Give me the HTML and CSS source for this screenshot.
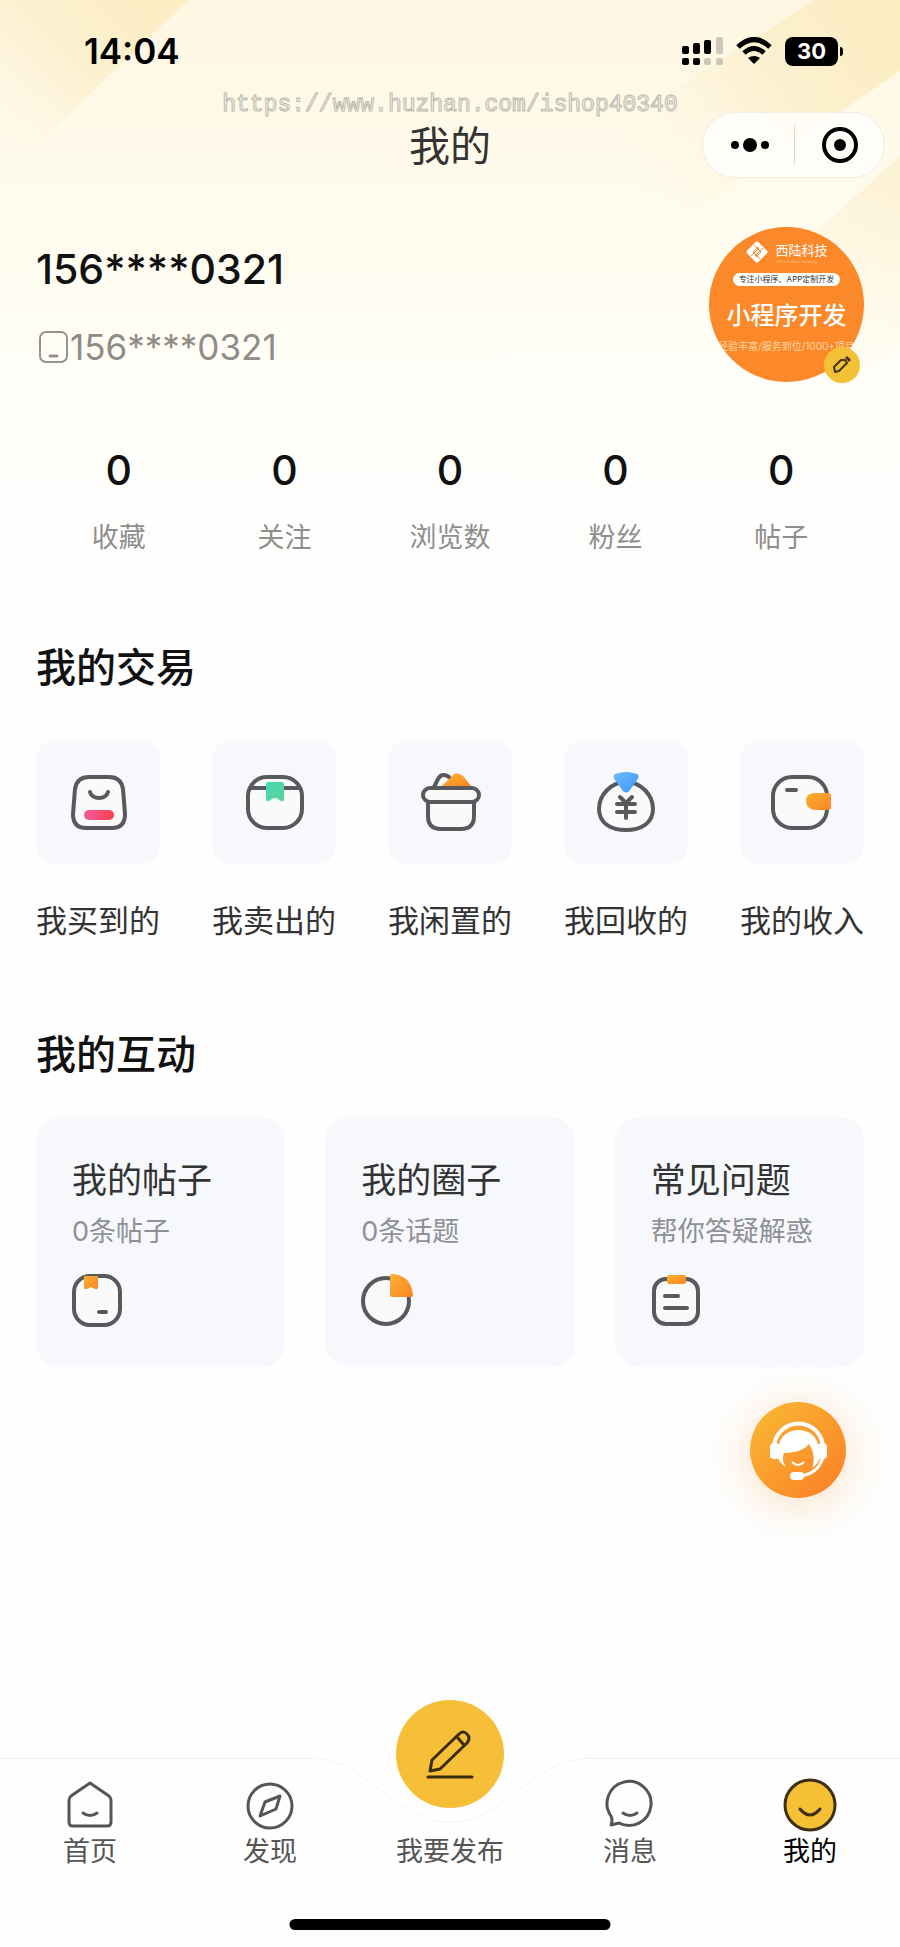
FILE: index.html
```html
<!DOCTYPE html>
<html lang="zh-CN">
<head>
    <meta charset="UTF-8">
    <meta name="viewport" content="width=device-width, initial-scale=1.0">
    <title>我的</title>
    <link rel="stylesheet" href="styles.css">
</head>
<body>
<div class="page">

  <!-- background light streaks -->
  <svg class="streaks" viewBox="0 0 900 600" preserveAspectRatio="none" aria-hidden="true">
    <defs>
      <linearGradient id="streakLeft" gradientUnits="userSpaceOnUse" x1="150" y1="10" x2="10" y2="150">
        <stop offset="0" stop-color="#fbedc4"/>
        <stop offset=".5" stop-color="#fcf1d2"/>
        <stop offset="1" stop-color="#fff6e4" stop-opacity="0"/>
      </linearGradient>
      <linearGradient id="streakRight" gradientUnits="userSpaceOnUse" x1="900" y1="20" x2="640" y2="190">
        <stop offset="0" stop-color="#fbedc0"/>
        <stop offset=".5" stop-color="#fcf1d2"/>
        <stop offset="1" stop-color="#fff8e8" stop-opacity="0"/>
      </linearGradient>
      <linearGradient id="streakLow" gradientUnits="userSpaceOnUse" x1="900" y1="180" x2="790" y2="390">
        <stop offset="0" stop-color="#fcf2d4"/>
        <stop offset="1" stop-color="#fffaec" stop-opacity="0"/>
      </linearGradient>
    </defs>
    <path d="M0 0H188L0 180Z" fill="url(#streakLeft)"/>
    <path d="M815 0H900V71L700 208L560 208L630 118Z" fill="url(#streakRight)"/>
    <path d="M900 156V345L790 430L730 400V310Z" fill="url(#streakLow)"/>
  </svg>

  <header class="statusBar">
    <span class="time">14:04</span>
    <div class="statusIcons">
      <svg width="42" height="30" viewBox="0 0 42 30">
        <rect x="1" y="10" width="7" height="8" rx="2"/>
        <rect x="12" y="7" width="7" height="11" rx="2"/>
        <rect x="23" y="4" width="7" height="14" rx="2"/>
        <rect x="35" y="1" width="7" height="17" rx="2" fill="#cdc7b8"/>
        <rect x="1" y="22" width="7" height="7" rx="2"/>
        <rect x="12" y="22" width="7" height="7" rx="2"/>
        <rect x="23" y="22" width="7" height="7" rx="2" fill="#cdc7b8"/>
        <rect x="35" y="22" width="7" height="7" rx="2" fill="#cdc7b8"/>
      </svg>
      <svg width="36" height="28" viewBox="0 0 36 28">
        <path d="M2 10Q18 -5 34 10" fill="none" stroke="#000" stroke-width="5"/>
        <path d="M8 16Q18 7 28 16" fill="none" stroke="#000" stroke-width="5"/>
        <path d="M12 21Q18 17 24 21L18 27Z"/>
      </svg>
      <div class="battery">30</div>
    </div>
  </header>

  <div class="watermark">https://www.huzhan.com/ishop40340</div>

  <div class="navBar">
    <h1>我的</h1>
    <div class="capsule">
      <button class="capsuleBtn" aria-label="更多">
        <svg width="40" height="16" viewBox="0 0 40 16"><circle cx="5" cy="8" r="4"/><circle cx="20" cy="8" r="7"/><circle cx="35" cy="8" r="4"/></svg>
      </button>
      <button class="capsuleBtn" aria-label="关闭">
        <svg width="38" height="38" viewBox="0 0 38 38"><circle cx="19" cy="19" r="16" fill="none" stroke="#000" stroke-width="4"/><circle cx="19" cy="19" r="6"/></svg>
      </button>
    </div>
  </div>

  <main>
    <section class="profile">
      <div class="user">
        <div class="userName">156****0321</div>
        <div class="userPhone">
          <svg width="30" height="34" viewBox="0 0 30 34" fill="none" stroke="#96938d" stroke-width="2" stroke-linecap="round"><rect x="2" y="2" width="27" height="30" rx="6"/><path d="M12 26H19" stroke-width="3"/></svg>
          <span>156****0321</span>
        </div>
      </div>
      <a class="avatarLink" href="#" aria-label="编辑资料">
        <div class="avatar">
          <div class="brand">
            <svg width="24" height="24" viewBox="0 0 24 24">
              <rect x="4" y="4" width="16" height="16" rx="2" fill="#fff" transform="rotate(45 12 12)"/>
              <path d="M6 16L14 8M9 5L16 12L11 17M18 8L10 16M15 19L8 12L13 7" fill="none" stroke="#fb8829" stroke-width="1"/>
            </svg>
            <div class="brandText">西陆科技<small>TEEC Information Technology</small></div>
          </div>
          <div class="pill">专注小程序、APP定制开发</div>
          <div class="slogan">小程序开发</div>
          <div class="note">经验丰富/服务到位/1000+项目</div>
        </div>
        <span class="editBadge">
          <svg width="20" height="20" viewBox="0 0 20 20" fill="none" stroke="#40351a" stroke-width="2" stroke-linejoin="round"><path d="M9 5H13L15 8L7 16L3 17L2 12Z"/><path d="M14 2L18 6" stroke-width="3"/></svg>
        </span>
      </a>
    </section>

    <section class="stats">
      <a href="#"><b>0</b><span>收藏</span></a>
      <a href="#"><b>0</b><span>关注</span></a>
      <a href="#"><b>0</b><span>浏览数</span></a>
      <a href="#"><b>0</b><span>粉丝</span></a>
      <a href="#"><b>0</b><span>帖子</span></a>
    </section>

    <h2>我的交易</h2>
    <section class="trade">
      <a href="#">
        <svg viewBox="0 0 124 124" class="tile">
          <defs><linearGradient id="pink"><stop offset="0" stop-color="#ee5c9d"/><stop offset="1" stop-color="#fc3d4b"/></linearGradient></defs>
          <path class="line" d="M53 37H73Q85 37 87 49L89 74Q89 88 76 88H50Q37 88 37 74L39 49Q41 37 53 37Z"/>
          <path class="line" d="M54 52C56 60 70 60 72 52"/>
          <rect x="48" y="70" width="30" height="10" rx="5" fill="url(#pink)"/>
        </svg>
        <span>我买到的</span>
      </a>
      <a href="#">
        <svg viewBox="0 0 124 124" class="tile">
          <defs><linearGradient id="green" x1="0" y1="0" x2="1" y2="1"><stop offset="0" stop-color="#3fdcb0"/><stop offset="1" stop-color="#62cfa0"/></linearGradient></defs>
          <rect class="line" x="36" y="37" width="54" height="51" rx="19"/>
          <path class="line" d="M39 48H87"/>
          <path d="M56 42H70Q72 42 72 44V59Q72 62 69 61L66 59Q63 57 60 59L57 61Q54 62 54 59V44Q54 42 56 42Z" fill="url(#green)"/>
        </svg>
        <span>我卖出的</span>
      </a>
      <a href="#">
        <svg viewBox="0 0 124 124" class="tile">
          <defs><linearGradient id="orange" x1="0" y1="0" x2="1" y2="1"><stop offset="0" stop-color="#f9b031"/><stop offset="1" stop-color="#fb8524"/></linearGradient></defs>
          <path class="line" d="M46 47L50 39Q54 32 61 37" fill="none"/>
          <path d="M53 47L65 35Q69 31 75 36L84 47Z" fill="url(#orange)"/>
          <path class="line" d="M40 61V76Q40 89 53 89H73Q86 89 86 76V61"/>
          <rect class="line" x="35" y="48" width="56" height="14" rx="7"/>
        </svg>
        <span>我闲置的</span>
      </a>
      <a href="#">
        <svg viewBox="0 0 124 124" class="tile">
          <defs><linearGradient id="blue" x1="0" y1="0" x2="1" y2="1"><stop offset="0" stop-color="#6fbcfb"/><stop offset="1" stop-color="#3995fa"/></linearGradient></defs>
          <path class="line" d="M62 42C77 42 89 55 89 69C89 84 76 90 62 90S35 84 35 69C35 55 47 42 62 42Z"/>
          <path d="M55 33Q62 31 69 33L73 34Q76 36 73 40L66 50Q62 55 58 50L51 40Q48 36 51 34Z" fill="url(#blue)"/>
          <path class="line" d="M56 57L62 63L68 57M53 64H71M53 72H71M62 64V78" fill="none"/>
        </svg>
        <span>我回收的</span>
      </a>
      <a href="#">
        <svg viewBox="0 0 124 124" class="tile">
          <rect class="line" x="33" y="37" width="54" height="51" rx="19"/>
          <path class="line" d="M47 50H56"/>
          <path d="M75 53H88Q91 53 91 56V67Q91 70 88 70H75Q66 69 66 61T75 53Z" fill="url(#orange)"/>
        </svg>
        <span>我的收入</span>
      </a>
    </section>

    <h2>我的互动</h2>
    <section class="cards">
      <a href="#">
        <h3>我的帖子</h3>
        <p>0条帖子</p>
        <svg width="54" height="54" viewBox="0 0 54 54">
          <rect class="line" x="2" y="2" width="46" height="49" rx="16"/>
          <path d="M12 2H26V13Q26 16 23 15L19 13L15 15Q12 16 12 13Z" fill="url(#orange)"/>
          <path class="line" d="M27 38H34"/>
        </svg>
      </a>
      <a href="#">
        <h3>我的圈子</h3>
        <p>0条话题</p>
        <svg width="54" height="54" viewBox="0 0 54 54">
          <circle class="line" cx="25" cy="27" r="23"/>
          <path d="M31 0Q50 1 52 21Q52 23 50 23H31Q29 23 29 21V2Q29 0 31 0Z" fill="url(#orange)"/>
        </svg>
      </a>
      <a href="#">
        <h3>常见问题</h3>
        <p>帮你答疑解惑</p>
        <svg width="54" height="54" viewBox="0 0 54 54">
          <rect class="line" x="3" y="5" width="44" height="45" rx="12"/>
          <rect x="16" y="1" width="19" height="9" rx="2" fill="url(#orange)"/>
          <path class="line" d="M14 22H27M14 34H36"/>
        </svg>
      </a>
    </section>
  </main>

  <button class="service" aria-label="联系客服">
    <svg width="96" height="96" viewBox="0 0 96 96">
      <path d="M24 46A24.500 24.500 0 0 1 73 46" fill="none" stroke="#fff" stroke-width="4"/>
      <rect x="20" y="41" width="9" height="16" rx="4" fill="#fff"/>
      <rect x="68" y="41" width="9" height="16" rx="4" fill="#fff"/>
      <path d="M27 44C30 22 67 22 70 44L71 54C69 60 66 63 62 66C65 58 64 50 59 42C56 47 46 51 34 51C32 56 33 61 36 65C30 62 28 56 26 52Z" fill="#fff"/>
      <path d="M28 42C33 22 64 22 69 42" fill="none" stroke="#fa9f2d" stroke-width="2"/>
      <path d="M42 60Q48 66 54 60" fill="none" stroke="#fff" stroke-width="2"/>
      <path d="M73 55Q68 73 48 74" fill="none" stroke="#fff" stroke-width="3"/>
      <rect x="40" y="70" width="14" height="8" rx="4" fill="#fff"/>
    </svg>
  </button>

  <nav class="tabBar">
    <div class="tabEdge">
      <i></i>
      <svg width="276" height="68" viewBox="0 0 276 68" fill="none" stroke="#f4f4f4"><path d="M0 .5C54 .5 84 64.500 138 64.500S222 .5 276 .5"/></svg>
      <i></i>
    </div>
    <a href="#">
      <svg width="54" height="54" viewBox="0 0 54 54" class="tabIcon"><path d="M27 5L46 18Q48 20 48 22V44Q48 48 44 48H10Q6 48 6 44V22Q6 20 8 18Z"/><path d="M20 35Q27 40 34 35"/></svg>
      <span>首页</span>
    </a>
    <a href="#">
      <svg width="54" height="54" viewBox="0 0 54 54" class="tabIcon"><circle cx="27" cy="28" r="22"/><path d="M37 18L33 31L17 38L22 24Z"/></svg>
      <span>发现</span>
    </a>
    <a href="#" class="publish">
      <span class="publishIcon">
        <svg width="54" height="54" viewBox="0 0 54 54" fill="none" stroke="#3b2d10" stroke-width="3" stroke-linejoin="round" stroke-linecap="round"><path d="M7 44L9 33L36 7Q40 3 44 7T44 16L17 42Z"/><path d="M34 10L41 18M5 50H49"/></svg>
      </span>
      <span>我要发布</span>
    </a>
    <a href="#">
      <svg width="54" height="54" viewBox="0 0 54 54" class="tabIcon"><path d="M8 38A22 22 0 1 1 16 45L8 47Q10 42 8 38Z"/><path d="M20 35Q27 40 34 35"/></svg>
      <span>消息</span>
    </a>
    <a href="#" class="active">
      <svg width="54" height="54" viewBox="0 0 54 54" class="tabIcon"><circle cx="27" cy="27" r="25"/><path d="M17 31Q27 43 37 31"/></svg>
      <span>我的</span>
    </a>
    <div class="homeLine"></div>
  </nav>
</div>
</body>
</html>
```

FILE: styles.css
```css
* {
    box-sizing: border-box;
}

body {
    margin: 0;
    background-color: #fefefe;
    color: #333;
    font-family: Inter, "Noto Sans CJK SC", sans-serif;
}

a {
    color: inherit;
    text-decoration: none;
}

button {
    border: 0;
    padding: 0;
    background: none;
    cursor: pointer;
}

svg {
    display: block;
}

h1, h2, h3, p {
    margin: 0;
    font-weight: normal;
}

.page {
    position: relative;
    display: flex;
    flex-direction: column;
    min-height: 100vh;
    background: linear-gradient(#fff6e2 0, #fffaea 150px, #fffdf1 280px, #fffefa 400px, #fefefe 580px);
}

.streaks {
    position: absolute;
    top: 0;
    left: 0;
    width: 100%;
    height: 600px;
}

.statusBar, .navBar, main {
    position: relative;
}

/* status bar */
.statusBar {
    display: flex;
    align-items: center;
    justify-content: space-between;
    height: 102px;
    padding: 0 57px 0 84px;
    color: #000;
}

.time {
    font-size: 35px;
    font-weight: 600;
}

.statusIcons {
    display: flex;
    align-items: center;
    gap: 13px;
}

.battery {
    position: relative;
    width: 53px;
    height: 29px;
    margin-right: 5px;
    border-radius: 8px;
    background-color: #000;
    color: #fff;
    font-size: 22px;
    line-height: 29px;
    font-weight: 700;
    text-align: center;
}

.battery::after {
    content: "";
    position: absolute;
    top: 10px;
    right: -5px;
    width: 3px;
    height: 9px;
    border-radius: 0 4px 4px 0;
    background-color: #000;
}

.watermark {
    position: absolute;
    top: 90px;
    left: 0;
    width: 100%;
    color: #fffaea;
    font-family: "Liberation Mono", monospace;
    font-size: 23px;
    line-height: 30px;
    text-align: center;
    -webkit-text-stroke: 1px #bab7af;
}

/* title and capsule */
.navBar {
    display: flex;
    align-items: center;
    justify-content: center;
    height: 86px;
}

.navBar h1 {
    padding-top: 2px;
    font-size: 41px;
    line-height: 60px;
}

.capsule {
    position: absolute;
    right: 15px;
    display: flex;
    align-items: center;
    width: 183px;
    height: 66px;
    padding-left: 2px;
    border: 1px solid #f1ede3;
    border-radius: 33px;
    background-color: rgba(255, 255, 255, 0.8);
}

.capsuleBtn {
    display: flex;
    flex: 1;
    align-items: center;
    justify-content: center;
    height: 40px;
}

.capsuleBtn + .capsuleBtn {
    border-left: 1px solid #dddad2;
}

main {
    padding: 0 36px;
}

/* user info */
.profile {
    display: flex;
    justify-content: space-between;
    padding-top: 39px;
}

.userName {
    margin-top: 14px;
    color: #111;
    font-size: 41px;
    line-height: 56px;
    font-weight: 500;
}

.userPhone {
    display: flex;
    align-items: center;
    gap: 2px;
    margin-top: 22px;
    padding-left: 2px;
    color: #8f8c86;
    font-size: 35px;
    line-height: 56px;
}

.avatarLink {
    position: relative;
}

.avatar {
    display: flex;
    flex-direction: column;
    align-items: center;
    width: 155px;
    height: 155px;
    padding-top: 13px;
    overflow: hidden;
    border-radius: 50%;
    background-color: #fb8829;
    color: #fff;
    white-space: nowrap;
}

.brand {
    display: flex;
    gap: 6px;
    height: 26px;
}

.brandText {
    font-size: 13px;
    line-height: 20px;
}

.brandText small {
    display: block;
    color: #ffc68f;
    font-size: 3px;
    line-height: 4px;
}

.pill {
    margin-top: 7px;
    padding: 0 6px;
    border-radius: 7px;
    background-color: #fff;
    color: #333;
    font-size: 8px;
    line-height: 13px;
}

.slogan {
    margin-top: 12px;
    font-size: 24px;
    line-height: 36px;
    font-weight: 500;
}

.note {
    margin-top: 4px;
    color: #ffd6a6;
    font-size: 10px;
    line-height: 16px;
}

.editBadge {
    position: absolute;
    top: 120px;
    right: 4px;
    display: flex;
    align-items: center;
    justify-content: center;
    width: 36px;
    height: 36px;
    border-radius: 50%;
    background-color: #f4c136;
}

.stats {
    display: flex;
    margin-top: 64px;
}

.stats a {
    display: flex;
    flex: 1;
    flex-direction: column;
    align-items: center;
    gap: 26px;
    color: #8e8e8e;
    font-size: 27px;
    line-height: 36px;
}

.stats b {
    color: #111;
    font-size: 41px;
    line-height: 48px;
    font-weight: 500;
}

h2 {
    margin-top: 84px;
    color: #111;
    font-size: 40px;
    line-height: 56px;
    font-weight: 500;
}

/* trade tiles */
.trade {
    display: flex;
    justify-content: space-between;
    margin-top: 44px;
}

.trade a {
    display: flex;
    flex-direction: column;
    align-items: center;
    gap: 35px;
    font-size: 31px;
    line-height: 44px;
}

.tile {
    width: 124px;
    height: 124px;
    border-radius: 20px;
    background-color: #f6f8fc;
}

.line {
    fill: #fafafb;
    stroke: #57595c;
    stroke-width: 4;
    stroke-linecap: round;
    stroke-linejoin: round;
}

/* cards */
.cards {
    display: grid;
    grid-template-columns: repeat(3, 1fr);
    gap: 40px;
    margin-top: 34px;
}

.cards a {
    padding: 36px 0 39px 36px;
    border-radius: 24px;
    background-color: #f6f8fc;
}

.cards h3 {
    font-size: 35px;
    line-height: 54px;
}

.cards p {
    margin: 7px 0 24px;
    color: #8f9094;
    font-size: 27px;
    line-height: 36px;
}

.service {
    align-self: flex-end;
    width: 96px;
    height: 96px;
    margin: 35px 54px 0 0;
    border-radius: 50%;
    background: linear-gradient(135deg, #f9bb33, #fb7d26);
    box-shadow: 0 6px 48px rgba(240, 150, 50, 0.3);
}

/* bottom tabs */
.tabBar {
    position: relative;
    display: flex;
    height: 189px;
    margin-top: auto;
}

.tabEdge {
    position: absolute;
    top: 0;
    left: 0;
    display: flex;
    width: 100%;
}

.tabEdge i {
    flex: 1;
    height: 1px;
    background-color: #ededed;
}

.tabBar a {
    position: relative;
    display: flex;
    flex: 1;
    flex-direction: column;
    align-items: center;
    padding-top: 20px;
    color: #555;
    font-size: 27px;
    line-height: 40px;
}

.tabIcon {
    fill: none;
    stroke: #555;
    stroke-width: 3;
    stroke-linejoin: round;
    stroke-linecap: round;
}

.tabBar .active {
    color: #000;
}

.active .tabIcon {
    fill: #f6c034;
    stroke: #3b2f14;
}

.publishIcon {
    display: flex;
    align-items: center;
    justify-content: center;
    width: 108px;
    height: 108px;
    margin: -78px 0 24px;
    border-radius: 50%;
    background-color: #f6bf37;
}

.homeLine {
    position: absolute;
    bottom: 17px;
    left: 50%;
    width: 321px;
    height: 11px;
    border-radius: 6px;
    background-color: #000;
    transform: translateX(-50%);
}
```
